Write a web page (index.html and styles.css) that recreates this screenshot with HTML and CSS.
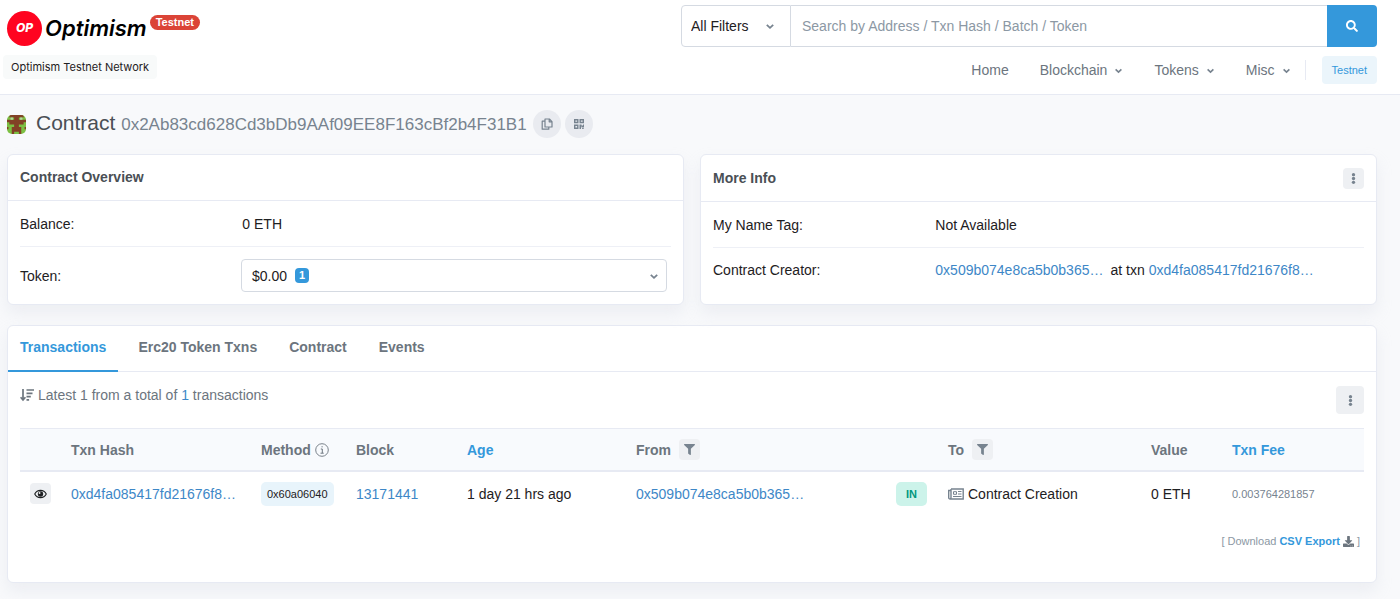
FILE: index.html
```html
<!DOCTYPE html>
<html lang="en">
<head>
<meta charset="utf-8">
<meta name="viewport" content="width=device-width, initial-scale=1">
<title>Contract - Optimism Testnet</title>
<link rel="stylesheet" href="styles.css">
</head>
<body>
<svg class="sprite" aria-hidden="true">
  <symbol id="chevron" viewBox="0 0 10 10"><path d="M1.8 3.8L5 6.8L8.2 3.8" fill="none" stroke="currentColor" stroke-width="1.8"/></symbol>
  <symbol id="filter" viewBox="0 0 512 512"><path d="M487.976 0H24.028C2.71 0-8.047 25.866 7.058 40.971L192 225.941V432c0 7.831 3.821 15.17 10.237 19.662l80 55.98C298.02 518.69 320 507.493 320 487.98V225.941l184.947-184.97C520.021 25.896 509.338 0 487.976 0z"/></symbol>
  <symbol id="dots" viewBox="0 0 12 12"><circle cx="6" cy="1.8" r="1.8"/><circle cx="6" cy="6" r="1.8"/><circle cx="6" cy="10.2" r="1.8"/></symbol>
</svg>

<header class="header">
  <div class="brand">
    <a class="logo" href="#" aria-label="Optimism Testnet">
      <span class="logo-disc">OP</span>
      <span class="logo-word">Optimism</span>
      <span class="logo-badge">Testnet</span>
    </a>
    <span class="network">Optimism Testnet Network</span>
  </div>
  <div class="header-side">
    <form class="search">
      <div class="search-filter">
        <select aria-label="Search filter"><option>All Filters</option></select>
        <svg class="chevron"><use href="#chevron"/></svg>
      </div>
      <input class="search-input" type="text" aria-label="Search" placeholder="Search by Address / Txn Hash / Batch / Token">
      <button class="search-button" type="button" aria-label="Search">
        <svg viewBox="0 0 512 512"><path d="M505 442.7L405.3 343c-4.5-4.5-10.6-7-17-7H372c27.6-35.3 44-79.7 44-128C416 93.1 322.9 0 208 0S0 93.1 0 208s93.1 208 208 208c48.3 0 92.7-16.4 128-44v16.3c0 6.4 2.5 12.5 7 17l99.7 99.7c9.4 9.4 24.6 9.4 33.9 0l28.3-28.3c9.4-9.4 9.4-24.6.1-34zM208 336c-70.7 0-128-57.2-128-128 0-70.7 57.2-128 128-128 70.7 0 128 57.2 128 128 0 70.7-57.2 128-128 128z"/></svg>
      </button>
    </form>
    <nav class="nav">
      <a href="#">Home</a>
      <a href="#">Blockchain <svg class="chevron"><use href="#chevron"/></svg></a>
      <a href="#">Tokens <svg class="chevron"><use href="#chevron"/></svg></a>
      <a href="#">Misc <svg class="chevron"><use href="#chevron"/></svg></a>
      <span class="nav-divider"></span>
      <button class="net-button" type="button">Testnet</button>
    </nav>
  </div>
</header>

<main class="main">
  <div class="title">
    <svg class="identicon" viewBox="0 0 8 8">
      <path fill="#7cc043" d="M0 0h8v8H0z"/>
      <path fill="#824126" d="M1 0h6v1H1zM3 1h2v1H3zM0 2h8v1H0zM1 3h6v1H1zM3 4h2v1H3zM2 5h4v2H2zM2 7h1v1H2zM5 7h1v1H5zM0 5h.600v1H0zM7.400 5H8v1h-.600z"/>
      <path fill="#b5d4a0" d="M1.500 1h1v1h-1zM5.500 1h1v1h-1z"/>
    </svg>
    <h1>Contract <span class="address">0x2Ab83cd628Cd3bDb9AAf09EE8F163cBf2b4F31B1</span></h1>
    <div class="title-tools">
      <button class="round" type="button" aria-label="Copy address">
        <svg class="line" viewBox="0 0 12 12"><path stroke-width="1.200" stroke-linejoin="round" d="M4 1h4.400L11 3.600V9H4zM8.200 1v2.800H11M4 3.200H1.200v8h6.600V9"/></svg>
      </button>
      <button class="round" type="button" aria-label="Show QR code">
        <svg viewBox="0 0 12 12"><path fill-rule="evenodd" d="M1 1h4.500v4.200H1zM2.400 2.400v1.400h1.700V2.400zM6.500 1H11v4.200H6.500zM7.900 2.400v1.400h1.700V2.400zM1 6.500h4.500V11H1zM2.400 7.900v1.700h1.700V7.900zM6.500 6.500h2v1H10v-1h1v3H8.500V8.500H8V11H6.500zM9 10h.9v1H9zM10.300 10h.7v1h-.7z"/></svg>
      </button>
    </div>
  </div>

  <div class="cards">
    <section class="card">
      <div class="card-head"><h2>Contract Overview</h2></div>
      <div class="card-body">
        <div class="row"><span>Balance:</span><span>0 ETH</span></div>
        <div class="row row-token">
          <span id="token-label">Token:</span>
          <button class="token-select" type="button" aria-labelledby="token-label"><span>$0.00</span><span class="count">1</span><svg class="chevron"><use href="#chevron"/></svg></button>
        </div>
      </div>
    </section>
    <section class="card">
      <div class="card-head card-head-tools">
        <h2>More Info</h2>
        <button class="mini" type="button" aria-label="More options"><svg><use href="#dots"/></svg></button>
      </div>
      <div class="card-body">
        <div class="row"><span>My Name Tag:</span><span>Not Available</span></div>
        <div class="row"><span>Contract Creator:</span>
          <span class="creator"><a href="#">0x509b074e8ca5b0b365…</a><span>at txn</span><a href="#">0xd4fa085417fd21676f8…</a></span>
        </div>
      </div>
    </section>
  </div>

  <section class="card txns">
    <nav class="tabs">
      <a class="active" href="#">Transactions</a>
      <a href="#">Erc20 Token Txns</a>
      <a href="#">Contract</a>
      <a href="#">Events</a>
    </nav>
    <div class="txns-body">
      <div class="summary">
        <p><svg class="sort line" viewBox="0 0 14 14"><path stroke-width="1.700" d="M3 1v11M.6 9.200L3 12l2.400-2.800M6.500 2H14M6.500 5.300h6M6.500 8.600h4.300M6.500 11.900h2.600"/></svg>Latest 1 from a total of <a href="#">1</a> transactions</p>
        <button class="mini mini-large" type="button" aria-label="Table options"><svg><use href="#dots"/></svg></button>
      </div>
      <table>
        <colgroup><col class="c-eye"><col class="c-hash"><col class="c-method"><col class="c-block"><col class="c-age"><col class="c-from"><col class="c-dir"><col class="c-to"><col class="c-value"><col class="c-fee"></colgroup>
        <thead>
          <tr>
            <th></th>
            <th>Txn Hash</th>
            <th><span class="cell">Method <svg class="info line" viewBox="0 0 14 14"><circle cx="7" cy="7" r="6.300" stroke-width=".9"/><path d="M5.800 6h1.500v4M5.500 10.200h3.200M6.500 3.800h1.200"/></svg></span></th>
            <th>Block</th>
            <th><a href="#">Age</a></th>
            <th><span class="cell cell-filter">From <button class="mini" type="button" aria-label="Filter by sender"><svg><use href="#filter"/></svg></button></span></th>
            <th></th>
            <th><span class="cell cell-filter">To <button class="mini" type="button" aria-label="Filter by recipient"><svg><use href="#filter"/></svg></button></span></th>
            <th>Value</th>
            <th><a href="#">Txn Fee</a></th>
          </tr>
        </thead>
        <tbody>
          <tr>
            <td><button class="mini eye" type="button" aria-label="Preview transaction"><svg viewBox="0 0 14 12"><path fill="none" stroke="currentColor" stroke-width="1.200" d="M.8 6C3.500.8 10.500.8 13.200 6 10.500 11.200 3.500 11.200.8 6z"/><circle cx="7" cy="6" r="2.900"/><circle cx="6" cy="4.900" r="1" fill="#eee"/></svg></button></td>
            <td><a href="#">0xd4fa085417fd21676f8…</a></td>
            <td><span class="tag">0x60a06040</span></td>
            <td><a href="#">13171441</a></td>
            <td>1 day 21 hrs ago</td>
            <td><a href="#">0x509b074e8ca5b0b365…</a></td>
            <td><span class="tag tag-in">IN</span></td>
            <td><span class="cell"><svg class="news line" viewBox="0 0 16 12"><path stroke-width="1.400" d="M3 1h12.200v10H2.200C1.200 11 .7 10.500.7 9.500V2.500H3V9.500c0 1-.4 1.500-1 1.500M3 1v2"/><path d="M5.500 3.700h3v2.600h-3zM10 3.500h3.500M10 6h3.500M5 8.500h8.500"/></svg>Contract Creation</span></td>
            <td>0 ETH</td>
            <td><span class="fee">0.003764281857</span></td>
          </tr>
        </tbody>
      </table>
      <p class="download">[ Download <a href="#">CSV Export</a> <svg viewBox="0 0 512 512"><path d="M216 0h80c13.300 0 24 10.700 24 24v168h87.700c17.800 0 26.700 21.500 14.100 34.100L269.700 378.300c-7.500 7.500-19.800 7.500-27.300 0L90.100 226.100c-12.600-12.600-3.700-34.100 14.100-34.100H192V24c0-13.300 10.700-24 24-24zm296 376v112c0 13.300-10.700 24-24 24H24c-13.300 0-24-10.700-24-24V376c0-13.300 10.700-24 24-24h146.700l49 49c20.100 20.100 52.500 20.100 72.600 0l49-49H488c13.300 0 24 10.700 24 24zm-124 88c0-11-9-20-20-20s-20 9-20 20 9 20 20 20 20-9 20-20zm64 0c0-11-9-20-20-20s-20 9-20 20 9 20 20 20 20-9 20-20z"/></svg> ]</p>
    </div>
  </section>
</main>
</body>
</html>
```

FILE: styles.css
```css
* { box-sizing: border-box; }

body {
  margin: 0;
  background: #f8f9fb;
  color: #1e2022;
  font: 14px/20px "Liberation Sans", Arial, sans-serif;
}

h1, h2, p { margin: 0; }
a { color: #3d87c7; text-decoration: none; }
button, input, select { font: inherit; color: inherit; margin: 0; }
button { border: 0; padding: 0; cursor: pointer; }
svg { fill: currentColor; flex: none; }
.line { fill: none; stroke: currentColor; }
.sprite { display: none; }
.chevron { width: 10px; height: 10px; color: #77838f; }

.header {
  display: flex;
  justify-content: space-between;
  gap: 24px;
  padding: 5px 23px 10px 7px;
  background: #fff;
  border-bottom: 1px solid #e7eaf3;
}

.brand { display: flex; flex-direction: column; align-items: flex-start; }
.logo { display: flex; align-items: center; gap: 3px; height: 46px; color: #000; }
.logo-disc {
  display: grid;
  place-items: center;
  width: 35px;
  height: 35px;
  border-radius: 50%;
  background: #ff0420;
  color: #fff;
  font: italic 800 12px/16px Inter, sans-serif;
}
.logo-word { font: italic 600 22px/32px Inter, sans-serif; }
.logo-badge {
  align-self: flex-start;
  margin-top: 10px;
  padding: 0 6px;
  border-radius: 8px;
  background: #db4437;
  color: #fff;
  font-size: 11px;
  font-weight: 700;
  line-height: 15px;
}
.network {
  margin-left: -4px;
  margin-top: 4px;
  padding: 4px 8px;
  border-radius: 4px;
  background: #f8fafa;
  font: 11px/16px Inter, sans-serif;
}

.header-side { flex: 0 1 696px; display: flex; flex-direction: column; gap: 9px; }
.search { display: flex; height: 42px; }
.search-filter {
  display: flex;
  align-items: center;
  width: 110px;
  border: 1px solid #d5dae2;
  border-radius: 4px 0 0 4px;
}
.search-filter select {
  width: 100%;
  height: 100%;
  padding: 0 24px 0 9px;
  border: 0;
  background: transparent;
  appearance: none;
}
.search-filter .chevron { margin-left: -25px; margin-right: 15px; pointer-events: none; }
.search-input {
  flex: 1;
  min-width: 0;
  padding: 0 11px;
  border: 1px solid #d5dae2;
  border-width: 1px 0;
  background: #fff;
}
.search-input::placeholder { color: #8c98a4; opacity: 1; }
.search-button {
  display: grid;
  place-items: center;
  width: 50px;
  border-radius: 0 4px 4px 0;
  background: #3498db;
  color: #fff;
}
.search-button svg { width: 12px; height: 12px; }

.nav { display: flex; justify-content: flex-end; align-items: center; }
.nav a { display: flex; align-items: center; gap: 7px; margin-right: 31px; color: #6c757e; }
.nav a:nth-of-type(4) { margin-right: 14px; }
.nav a .chevron { width: 9px; height: 9px; }
.nav-divider { width: 1px; height: 20px; margin-right: 16px; background: #e7eaf3; }
.net-button {
  padding: 5px 10px;
  border-radius: 4px;
  background: #ebf5fb;
  color: #3498db;
  font-size: 11px;
  line-height: 18px;
}

.main { padding: 14px 23px 16px 7px; }
.title { display: flex; align-items: center; height: 30px; }
.identicon { width: 19px; height: 19px; margin-right: 10px; border-radius: 5px; }
.title h1 { color: #4a4f55; font-size: 21px; font-weight: 400; line-height: 28px; }
.address { color: #77838f; font-size: 17px; }
.title-tools { display: flex; gap: 4px; margin-left: 6px; }
.round {
  display: grid;
  place-items: center;
  width: 28px;
  height: 28px;
  border-radius: 50%;
  background: #e9ebf0;
  color: #77838f;
}
.round svg { width: 12px; height: 12px; }

.cards { display: grid; grid-template-columns: 1fr 1fr; gap: 16px; margin: 15px 0 20px; }
.card {
  background: #fff;
  border: 1px solid #e7eaf3;
  border-radius: 6px;
  box-shadow: 0 8px 16px rgba(189, 197, 209, .2);
}
.card-head { padding: 12px; border-bottom: 1px solid #e7eaf3; line-height: 21px; }
.card-head-tools { display: flex; justify-content: space-between; align-items: center; padding-top: 13px; }
.card-head h2 { color: #4a4f55; font-size: 14px; }
.card-body { padding: 0 12px; }
.row {
  display: grid;
  grid-template-columns: 1fr 2fr;
  align-items: center;
  column-gap: 8px;
  min-height: 45px;
}
.row + .row { border-top: 1px solid #eef0f6; }
.row + .row-token { min-height: 58px; padding-right: 4px; }
.token-select {
  display: flex;
  align-items: center;
  gap: 8px;
  height: 33px;
  padding: 0 7px 0 10px;
  border: 1px solid #d5dae2;
  border-radius: 4px;
  background: #fff;
}
.token-select .chevron { margin-left: auto; }
.count {
  width: 14px;
  border-radius: 4px;
  background: #3498db;
  color: #fff;
  font-size: 11px;
  font-weight: 700;
  line-height: 15px;
  text-align: center;
}
.creator { display: flex; gap: 4px; }
.creator a:first-child { margin-right: 3px; }

.mini {
  display: grid;
  place-items: center;
  width: 21px;
  height: 21px;
  border-radius: 4px;
  background: #eef0f3;
  color: #77838f;
}
.mini svg { width: 11px; height: 11px; }
.mini-large { width: 28px; height: 28px; }
.mini.eye { color: #1e2022; }
.mini.eye svg { width: 13px; height: 12px; }

.tabs { display: flex; border-bottom: 1px solid #e7eaf3; }
.tabs a {
  margin-bottom: -1px;
  padding: 11px 12px 13px;
  border-bottom: 2px solid transparent;
  color: #6c757e;
  font-weight: 700;
}
.tabs a + a { margin-left: 8px; }
.tabs .active { border-color: #3498db; color: #3498db; }

.txns-body { padding: 14px 12px 31px; }
.summary { display: flex; justify-content: space-between; margin-bottom: 14px; color: #6c757e; line-height: 18px; }
.sort { width: 14px; height: 14px; margin-right: 4px; vertical-align: -2px; }

table { width: 100%; table-layout: fixed; border-collapse: separate; border-spacing: 0; }
th, td { padding: 0 10px; text-align: left; white-space: nowrap; }
th {
  height: 44px;
  background: #f8fafd;
  border-top: 1px solid #e7eaf3;
  border-bottom: 2px solid #e7eaf3;
  color: #6c757e;
}
th a { color: #3498db; }
td { height: 43px; }
.c-eye { width: 41px; }
.c-hash { width: 190px; }
.c-method { width: 95px; }
.c-block { width: 111px; }
.c-age { width: 169px; }
.c-from { width: 260px; }
.c-dir { width: 52px; }
.c-to { width: 203px; }
.c-value { width: 81px; }
.c-fee { width: 142px; }
.cell { display: flex; align-items: center; gap: 4px; }
.cell-filter { gap: 8px; }
.info { width: 14px; height: 14px; }
.news { width: 16px; height: 12px; color: #77838f; }
.tag {
  display: inline-block;
  padding: 0 6px;
  border-radius: 5px;
  background: #e8f4fb;
  font-size: 11px;
  line-height: 24px;
}
.tag-in { padding: 0 10px; background: #ccf3ea; color: #02977e; font-weight: 700; }
.fee { color: #77838f; font-size: 11px; }

.download {
  display: flex;
  justify-content: flex-end;
  align-items: center;
  gap: 3px;
  margin-top: 16px;
  padding-right: 4px;
  color: #8c98a4;
  font-size: 11px;
  line-height: 20px;
}
.download a { color: #3498db; font-weight: 700; }
.download svg { width: 11px; height: 11px; color: #6c757e; }
```
